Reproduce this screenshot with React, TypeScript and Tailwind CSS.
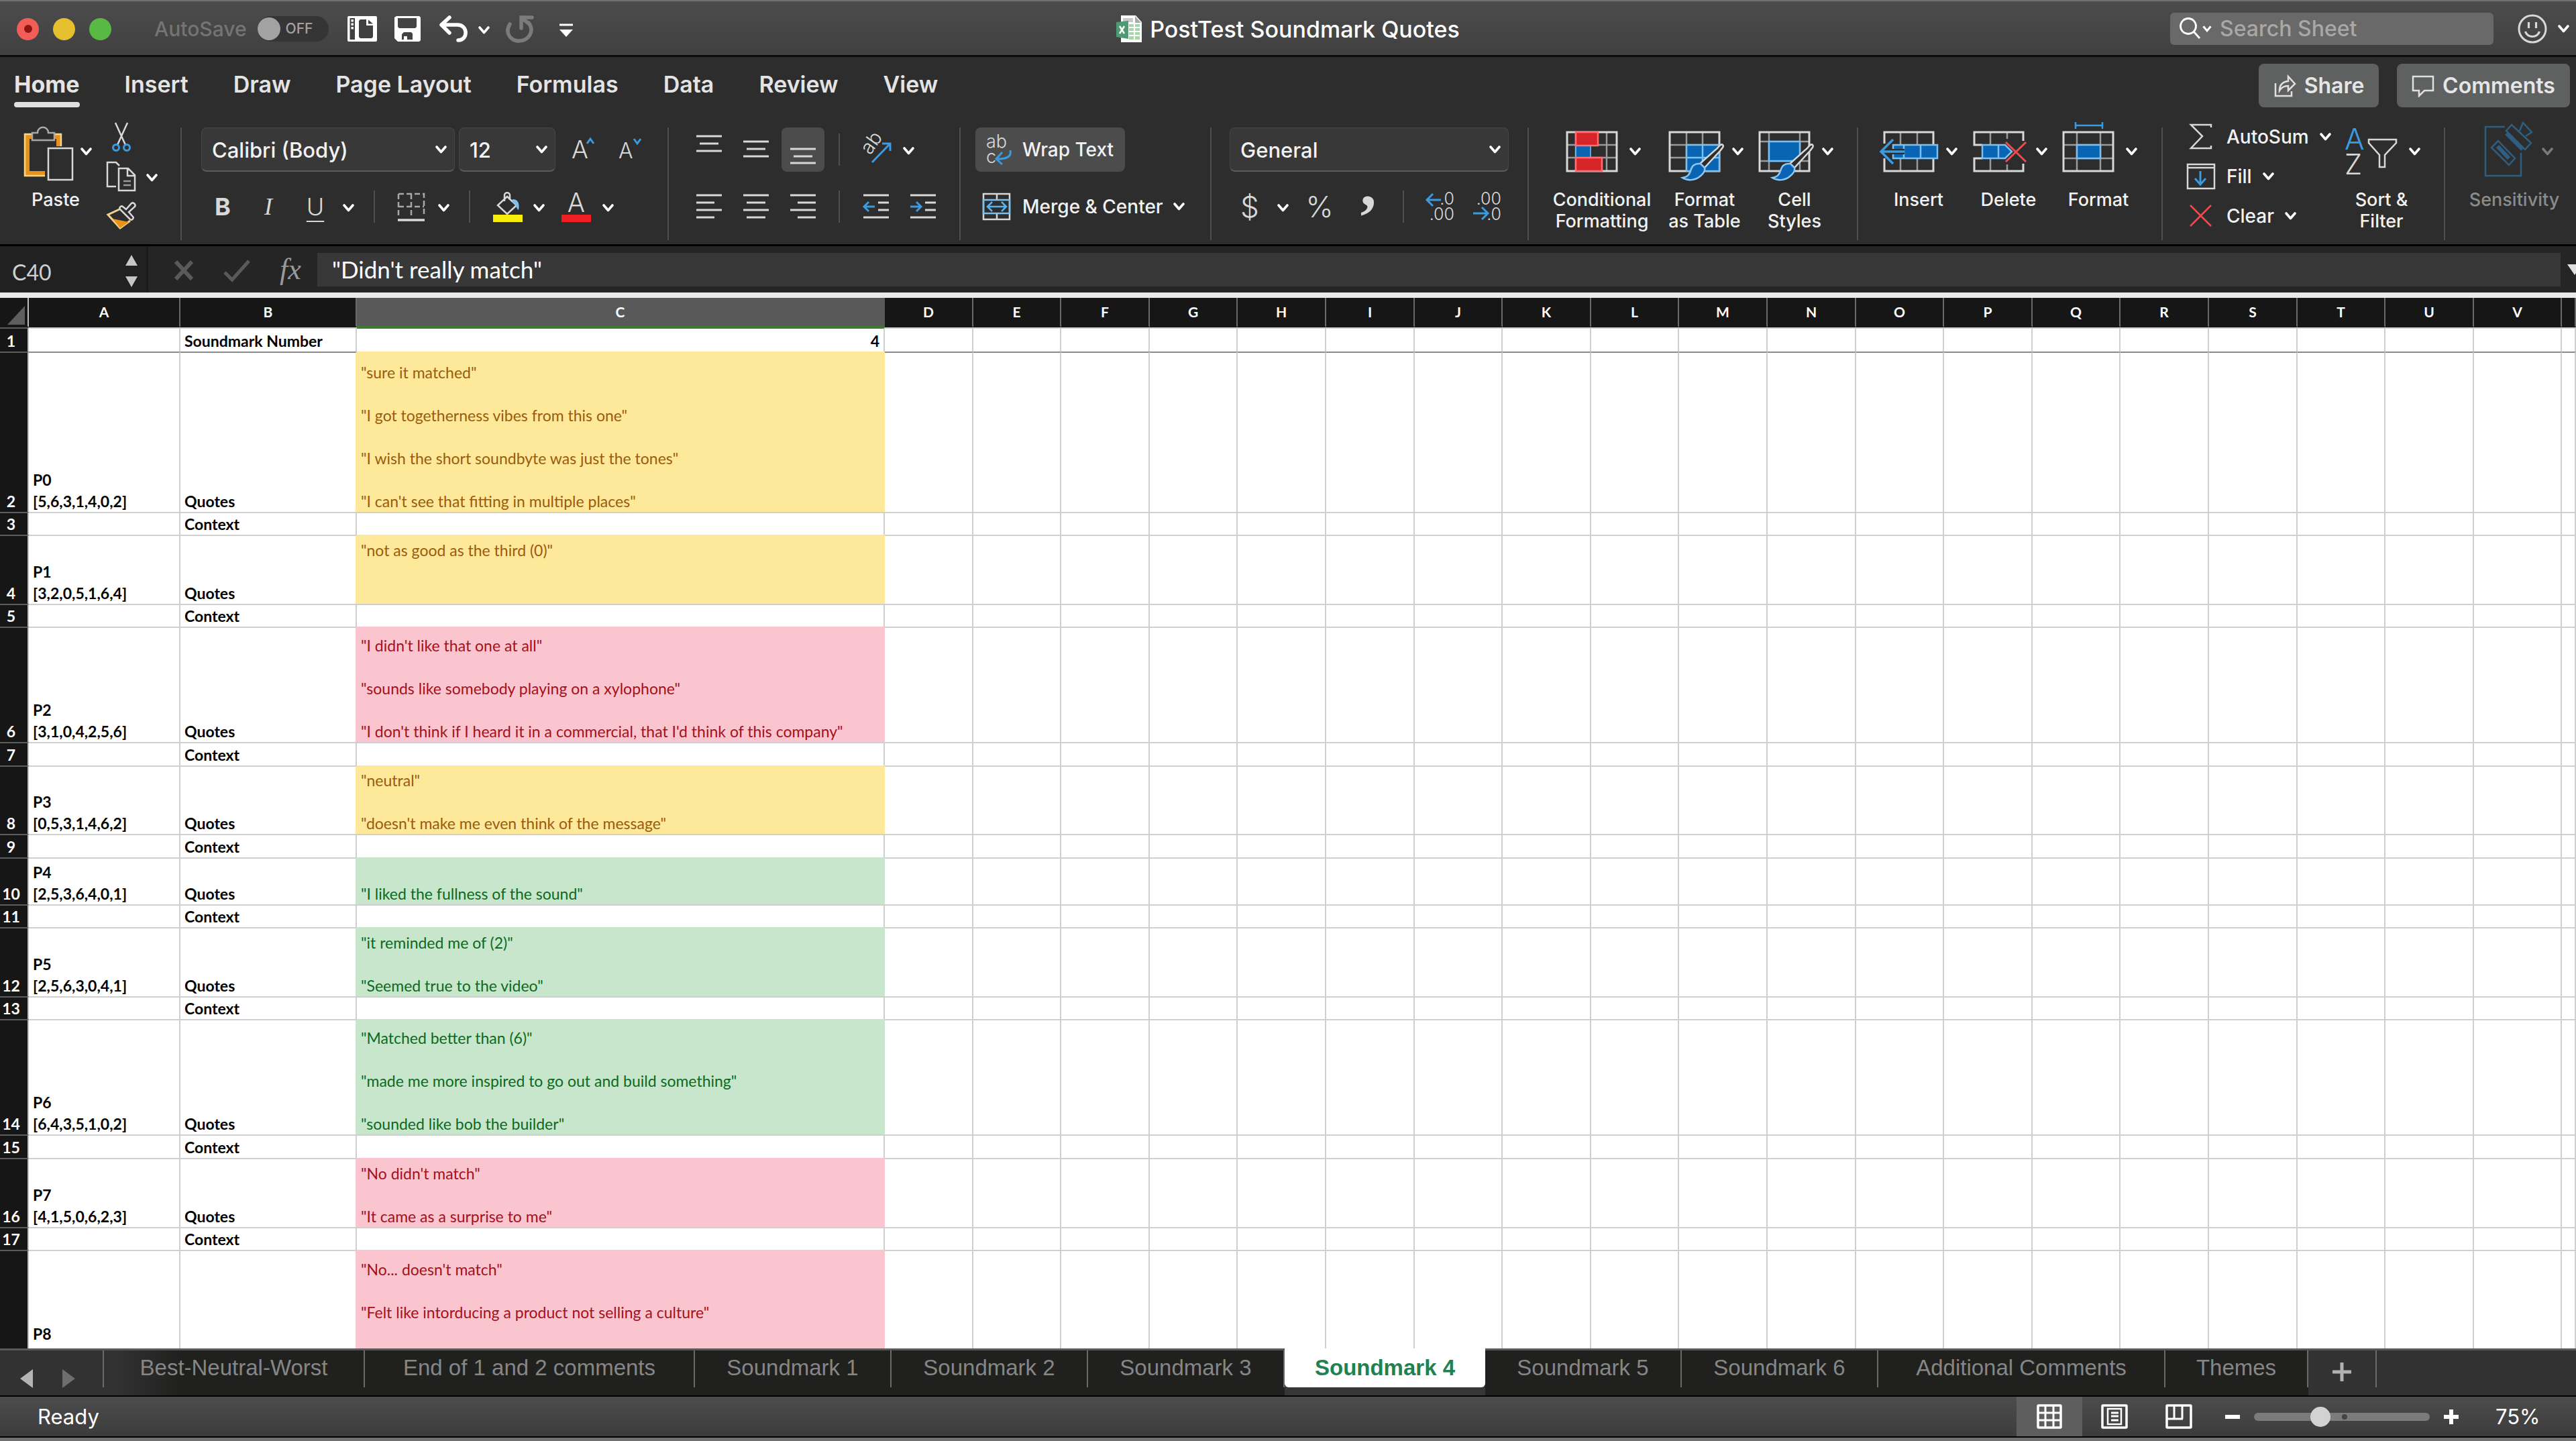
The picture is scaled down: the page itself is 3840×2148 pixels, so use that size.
import type { ReactNode } from 'react'
import clsx from 'clsx'

type Tone = 'neutral' | 'good' | 'bad'

interface Row {
  height: string
  order?: string[]
  label: string
  tone?: Tone
  lines?: string[]
}

const ROWS: Row[] = [
  { height: 'h-[239px]', order: ['P0', '[5,6,3,1,4,0,2]'], label: 'Quotes', tone: 'neutral', lines: ['"sure it matched"', '', '"I got togetherness vibes from this one"', '', '"I wish the short soundbyte was just the tones"', '', '"I can\'t see that fitting in multiple places"'] },
  { height: 'h-[34px]', label: 'Context' },
  { height: 'h-[103px]', order: ['P1', '[3,2,0,5,1,6,4]'], label: 'Quotes', tone: 'neutral', lines: ['"not as good as the third (0)"', '', ''] },
  { height: 'h-[34px]', label: 'Context' },
  { height: 'h-[172px]', order: ['P2', '[3,1,0,4,2,5,6]'], label: 'Quotes', tone: 'bad', lines: ['"I didn\'t like that one at all"', '', '"sounds like somebody playing on a xylophone"', '', '"I don\'t think if I heard it in a commercial, that I\'d think of this company"'] },
  { height: 'h-[35px]', label: 'Context' },
  { height: 'h-[102px]', order: ['P3', '[0,5,3,1,4,6,2]'], label: 'Quotes', tone: 'neutral', lines: ['"neutral"', '', '"doesn\'t make me even think of the message"'] },
  { height: 'h-[35px]', label: 'Context' },
  { height: 'h-[70px]', order: ['P4', '[2,5,3,6,4,0,1]'], label: 'Quotes', tone: 'good', lines: ['"I liked the fullness of the sound"'] },
  { height: 'h-[34px]', label: 'Context' },
  { height: 'h-[103px]', order: ['P5', '[2,5,6,3,0,4,1]'], label: 'Quotes', tone: 'good', lines: ['"it reminded me of (2)"', '', '"Seemed true to the video"'] },
  { height: 'h-[34px]', label: 'Context' },
  { height: 'h-[172px]', order: ['P6', '[6,4,3,5,1,0,2]'], label: 'Quotes', tone: 'good', lines: ['"Matched better than (6)"', '', '"made me more inspired to go out and build something"', '', '"sounded like bob the builder"'] },
  { height: 'h-[35px]', label: 'Context' },
  { height: 'h-[103px]', order: ['P7', '[4,1,5,0,6,2,3]'], label: 'Quotes', tone: 'bad', lines: ['"No didn\'t match"', '', '"It came as a surprise to me"'] },
  { height: 'h-[34px]', label: 'Context' },
  { height: 'h-[173px]', order: ['P8', ''], label: '', tone: 'bad', lines: ['"No... doesn\'t match"', '', '"Felt like intorducing a product not selling a culture"', '', ''] },
]

const FILL: Record<Tone, string> = {
  neutral: 'bg-[#fde999] text-[#9c5a0d] border-t-[#fde999] border-r-[#fde999]',
  good: 'bg-[#c8e6cb] text-[#0b6a1d] border-t-[#c8e6cb] border-r-[#c8e6cb]',
  bad: 'bg-[#fac5ce] text-[#a3101c] border-t-[#fac5ce] border-r-[#fac5ce]',
}
// right edge of column B, hidden where the filled cell starts
const EDGE: Record<Tone, string> = {
  neutral: 'border-r-[#fde999]',
  good: 'border-r-[#c8e6cb]',
  bad: 'border-r-[#fac5ce]',
}

const EMPTY_COLS = 'DEFGHIJKLMNOPQRSTUV'.split('')

const MENU = ['Home', 'Insert', 'Draw', 'Page Layout', 'Formulas', 'Data', 'Review', 'View']

const SHEETS = [
  { name: 'Best-Neutral-Worst', width: 'w-[391px]' },
  { name: 'End of 1 and 2 comments', width: 'w-[492px]' },
  { name: 'Soundmark 1', width: 'w-[293px]' },
  { name: 'Soundmark 2', width: 'w-[293px]' },
  { name: 'Soundmark 3', width: 'w-[293px]' },
  { name: 'Soundmark 4', width: 'w-[299px]', active: true },
  { name: 'Soundmark 5', width: 'w-[293px]' },
  { name: 'Soundmark 6', width: 'w-[293px]' },
  { name: 'Additional Comments', width: 'w-[428px]' },
  { name: 'Themes', width: 'w-[213px]' },
]

/* ---------- small pieces ---------- */

function Chevron({ className = 'text-white' }: { className?: string }) {
  return (
    <svg viewBox="0 0 17 12" className={clsx('w-[17px] h-3 shrink-0', className)} fill="none" stroke="currentColor" strokeWidth="3.6" strokeLinecap="round" strokeLinejoin="round">
      <path d="M2 2 8.500 9.500 15 2" />
    </svg>
  )
}

function MenuArrow({ label }: { label: string }) {
  return (
    <button aria-label={label} className="w-[30px] h-11 flex items-center justify-center pt-1">
      <Chevron />
    </button>
  )
}

function Icon({ children, className }: { children: ReactNode; className?: string }) {
  return (
    <svg viewBox="0 0 44 44" fill="none" stroke="#d8d8d8" strokeWidth="2.5" className={clsx('w-11 h-11 shrink-0 overflow-visible', className)}>
      {children}
    </svg>
  )
}

function Tool({ label, active, children }: { label: string; active?: boolean; children: ReactNode }) {
  return (
    <button aria-label={label} className={clsx('w-16 flex items-center justify-center rounded-lg', active ? 'h-[66px] bg-[#4c4c4c]' : 'h-12')}>
      {children}
    </button>
  )
}

function Divider() {
  return <div className="w-[2px] h-[168px] mt-2 bg-[#4f4f4f] shrink-0" />
}

function MiniDivider() {
  return <div className="w-[2px] h-12 bg-[#4f4f4f] shrink-0" />
}

interface BigButtonProps {
  label: string[]
  width: string
  icon: ReactNode
  gap?: string
  dim?: boolean
}

function BigButton({ label, width, icon, gap = 'gap-[18px]', dim }: BigButtonProps) {
  return (
    <button className={clsx('flex flex-col items-center shrink-0', width)}>
      <span className={clsx('flex items-center', gap)}>
        <svg viewBox="0 0 80 88" className="w-20 h-[88px] overflow-visible" fill="none" stroke="#d8d8d8" strokeWidth="2.5">
          {icon}
        </svg>
        <Chevron className={dim ? 'text-[#7a7a7a]' : 'text-white'} />
      </span>
      <span className={clsx('mt-3 text-[27px] leading-8 font-medium whitespace-nowrap', dim ? 'text-[#8b8b8b]' : 'text-[#f2f2f2]')}>
        {label.map(l => <span key={l} className="block">{l}</span>)}
      </span>
    </button>
  )
}

function Dropdown({ label, value, width }: { label: string; value: string; width: string }) {
  return (
    <div className={clsx('relative h-[66px]', width)}>
      <select
        aria-label={label}
        defaultValue={value}
        className="appearance-none w-full h-full pt-1 pl-[15px] pr-10 rounded-lg bg-[#383838] border border-[#464646] border-b-2 border-b-[#5c5c5c] text-[31px] font-medium text-[#f2f2f2]"
      >
        <option>{value}</option>
      </select>
      <span className="absolute right-3 top-0 h-full flex items-center pointer-events-none">
        <Chevron />
      </span>
    </div>
  )
}

function Bars({ rows }: { rows: [number, number, number][] }) {
  return (
    <Icon>
      {rows.map(([x1, x2, y]) => <path key={y} d={`M${x1} ${y}H${x2}`} strokeWidth="3" />)}
    </Icon>
  )
}

/* ---------- title bar ---------- */

function TitleBar() {
  return (
    <header className="h-[85px] pt-[2px] shrink-0 grid grid-cols-[1fr_auto_1fr] items-center bg-linear-to-b from-[#4c4c4c] to-[#404040] border-t-2 border-t-[#707070] border-b-3 border-b-[#0c0c0c]">
      <div className="flex items-center pl-[25px]">
        <div className="flex gap-[21px]">
          <button aria-label="Close" className="w-[33px] h-[33px] rounded-full bg-[#f25e57] flex items-center justify-center">
            <span className="w-3 h-3 rounded-full bg-[#8e1512]" />
          </button>
          <button aria-label="Minimize" className="w-[33px] h-[33px] rounded-full bg-[#e5c02c]" />
          <button aria-label="Zoom window" className="w-[33px] h-[33px] rounded-full bg-[#58ba43]" />
        </div>
        <label className="flex items-center ml-16 gap-4 text-[30px] font-medium text-[#747474]">
          AutoSave
          <input type="checkbox" className="sr-only" />
          <span className="w-[106px] h-[38px] rounded-full bg-[#353535] flex items-center gap-2">
            <span className="w-[34px] h-[34px] rounded-full bg-[#a2a2a2]" />
            <span className="text-[21px] text-[#a2a2a2]">OFF</span>
          </span>
        </label>
        <button aria-label="Templates" className="ml-7">
          <Icon>
            <rect x="0" y="3" width="44" height="38" rx="2" fill="#fff" stroke="none" />
            <path d="M3.500 6H11v32H3.500z" fill="#3f3f3f" stroke="none" />
            <path d="M7.200 8v3.500M7.200 13.500V17M7.200 19v3.500" stroke="#fff" strokeWidth="3.500" />
            <path d="M19 8h9v9h10v17l-2 2H19l-2-2V10zM31 8.500l7 6h-7z" fill="#3f3f3f" stroke="none" />
          </Icon>
        </button>
        <button aria-label="Save" className="ml-[27px]">
          <Icon>
            <path d="M2 3h34l2 2v34l-2 2H4l-5-5V5z" fill="#fff" stroke="none" />
            <path d="M4 6h28v13l-2 2H6l-2-2zM13 27h11l2 2v9h-8v-5h-5v5h-3v-8z" fill="#444" stroke="none" />
          </Icon>
        </button>
        <button aria-label="Undo" className="ml-[22px]">
          <Icon>
            <path d="M15 5 3 16 15 28M4 16h23c16 0 16 23 1 23" stroke="#fff" strokeWidth="5.500" strokeLinecap="round" strokeLinejoin="round" />
          </Icon>
        </button>
        <div className="ml-2"><MenuArrow label="Undo history" /></div>
        <button aria-label="Redo" className="ml-[17px]">
          <Icon>
            <path d="M6 15C-2 28 7 40 20 40s24-14 14-27M23 21V5h16M23 5l11 9" stroke="#7b7b7b" strokeWidth="5.500" strokeLinecap="round" />
          </Icon>
        </button>
        <button aria-label="Customize toolbar" className="ml-6">
          <Icon>
            <path d="M12 16h20" stroke="#fff" strokeWidth="3" />
            <path d="M12 23h20L22 34z" fill="#fff" stroke="none" />
          </Icon>
        </button>
      </div>

      <h1 className="flex items-center gap-3 text-[34px] font-medium text-white whitespace-nowrap">
        <svg viewBox="0 0 38 40" className="w-[38px] h-10">
          <path d="M7 0h22l9 10v30H7z" fill="#fff" />
          <path d="M10 4h15v6H10z" fill="#c9c9c9" />
          <path d="M28 1v10h9z" fill="#aaa" />
          <path d="M19 13h7v4h-7zM28 13h7v4h-7zM19 19h7v4h-7zM28 19h7v4h-7zM19 25h7v4h-7zM28 25h7v4h-7zM19 31h7v5h-7zM28 31h7v5h-7z" fill="#a5d7ab" />
          <path d="M0 10 18 8v27L0 32z" fill="#4d9a73" />
          <path d="m5 16 7 11M12 16 5 27" stroke="#fff" strokeWidth="2.500" />
        </svg>
        PostTest Soundmark Quotes
      </h1>

      <div className="flex items-center justify-end pr-[10px]">
        <label className="flex items-center w-[482px] h-12 rounded-md bg-[#696969] pl-[14px]">
          <svg viewBox="0 0 34 34" className="w-[34px] h-[34px]" fill="none" stroke="#fff" strokeWidth="2.800">
            <circle cx="13" cy="13" r="11.500" />
            <path d="m21 21 9 10" />
          </svg>
          <svg viewBox="0 0 17 12" className="w-[14px] h-[10px]" fill="none" stroke="#fff" strokeWidth="3.600">
            <path d="M1.800 1.500 8.500 9.500 15.200 1.500" />
          </svg>
          <input
            type="search"
            aria-label="Search Sheet"
            placeholder="Search Sheet"
            className="ml-3 w-[360px] bg-transparent outline-none text-[32px] font-medium placeholder:text-[#a8a8a8]"
          />
        </label>
        <button aria-label="Feedback" className="flex items-center ml-9 gap-4">
          <Icon>
            <circle cx="22" cy="22" r="20" strokeWidth="3" />
            <path d="M16.500 12v9M27.500 12v9M11.500 26c3 10 18 10 21 0" strokeWidth="3.200" />
          </Icon>
          <Chevron />
        </button>
      </div>
    </header>
  )
}

/* ---------- ribbon ---------- */

function MenuRow() {
  return (
    <div className="h-[97px] flex items-start justify-between pt-[10px] pl-[21px] pr-[9px]">
      <nav className="flex gap-[67px] pt-[13px]">
        {MENU.map(m => (
          <a
            key={m}
            href="#"
            className={clsx(
              'flex flex-col items-center text-[34px] leading-9 text-[#e4e4e4] whitespace-nowrap',
              m === 'Home' ? 'font-bold' : 'font-semibold',
            )}
          >
            {m}
            {m === 'Home' && <span className="mt-2 w-full h-2 rounded-full bg-[#e0e0de]" />}
          </a>
        ))}
      </nav>
      <div className="flex gap-[27px] text-[32px] font-semibold text-[#e6e6e6]">
        <button className="w-[179px] h-[65px] rounded-lg bg-[#5f6160] flex items-center justify-center gap-3">
          <svg viewBox="0 0 34 34" className="w-[34px] h-[34px]" fill="none" stroke="#e0e0e0" strokeWidth="2.500">
            <path d="M3 13v19h24v-7M9 24c0-9 5-13 13-14V3l10 11-10 10v-7c-6 0-10 2-13 7z" />
          </svg>
          Share
        </button>
        <button className="w-[258px] h-[65px] rounded-lg bg-[#5f6160] flex items-center justify-center gap-3">
          <svg viewBox="0 0 34 34" className="w-[34px] h-[34px]" fill="none" stroke="#e0e0e0" strokeWidth="2.500">
            <path d="M2 3h30v21H19l-8 8v-8H2z" />
          </svg>
          Comments
        </button>
      </div>
    </div>
  )
}

const BRUSH = (
  <>
    <path d="M84 34c-2-2-5 1-8 5L50 62l6 7 24-26c4-5 6-7 4-9z" fill="#2d2d2d" strokeWidth="2.500" />
    <path d="M51 62c-10-1-13 4-15 11-2 6-5 9-12 10 8 5 19 4 26-2 5-4 8-9 7-13z" fill="#0a64b4" stroke="#8cc8f2" />
  </>
)

function Ribbon() {
  return (
    <section className="shrink-0 bg-[#2d2d2d] border-b-3 border-b-black">
      <MenuRow />
      <div className="flex h-[182px]">
        {/* Clipboard */}
        <div className="flex w-[269px] pl-[29px] shrink-0">
          <BigButton
            width="w-[108px]"
            gap="gap-[11px]"
            label={['Paste']}
            icon={
              <>
                <rect x="11.500" y="21.500" width="47" height="55" stroke="#e8921e" strokeWidth="7" />
                <rect x="8" y="18" width="54" height="62" stroke="#fbd58a" strokeWidth="2.500" />
                <path d="M19 16h8c0-11 16-11 16 0h9v11H19z" fill="#2d2d2d" stroke="#a8a8a8" />
                <path d="M38 36h27v52H38z" fill="#2d2d2d" stroke="none" />
                <rect x="43" y="39" width="36" height="47" fill="#2d2d2d" />
              </>
            }
          />
          <div className="flex flex-col gap-[15px] ml-[22px]">
            <button aria-label="Cut">
              <Icon>
                <path d="M13 1 28 34M31 1 16 34" />
                <circle cx="14" cy="38" r="4.500" stroke="#3b9be0" strokeWidth="3" />
                <circle cx="30" cy="38" r="4.500" stroke="#3b9be0" strokeWidth="3" />
              </Icon>
            </button>
            <div className="flex gap-2">
              <button aria-label="Copy">
                <Icon>
                  <path d="M14 37H1V1h13l5 5M18 10h14l10 10v23H18zM31 10v11h11" />
                  <path d="M25 29h11M25 35h11" stroke="#9a9a9a" />
                </Icon>
              </button>
              <MenuArrow label="Copy options" />
            </div>
            <button aria-label="Format painter" className="w-11">
              <Icon>
                <path d="M19 12 2 20l18 20 15-11" stroke="#f7d38a" strokeWidth="3" />
                <path d="m9 26 24 5-13 9z" fill="#e8921e" stroke="none" />
                <path d="M24 8c-2-2-6 1-4 4l15 15c3 2 6-2 4-4l-6-7 9-8c2-3-2-7-5-5l-8 9z" />
              </Icon>
            </button>
          </div>
        </div>
        <Divider />

        {/* Font */}
        <div className="w-[724px] pl-[29px] pt-2 shrink-0 flex flex-col gap-7">
          <div className="flex items-center">
            <Dropdown label="Font" value="Calibri (Body)" width="w-[378px]" />
            <Dropdown label="Font size" value="12" width="w-[144px] ml-[6px]" />
            <button aria-label="Increase font size" className="ml-5">
              <svg viewBox="0 0 50 44" className="w-[50px] h-11 overflow-visible" fill="none">
                <text x="4" y="35" fontSize="37" fontWeight="300" fill="#d8d8d8">A</text>
                <path d="m27 13 5-7 5 7" stroke="#3b9be0" strokeWidth="3" />
              </svg>
            </button>
            <button aria-label="Decrease font size" className="ml-5">
              <svg viewBox="0 0 50 44" className="w-[50px] h-11 overflow-visible" fill="none">
                <text x="4" y="35" fontSize="32" fontWeight="300" fill="#d8d8d8">A</text>
                <path d="m27 6 5 7 5-7" stroke="#3b9be0" strokeWidth="3" />
              </svg>
            </button>
          </div>
          <div className="flex items-center h-12 text-[#d8d8d8] text-[36px] leading-none">
            <button aria-label="Bold" className="w-16 font-bold">B</button>
            <button aria-label="Italic" className="w-[72px] font-['Liberation_Serif'] italic">I</button>
            <button aria-label="Underline" className="w-[68px] font-light underline underline-offset-8 decoration-2">U</button>
            <MenuArrow label="Underline options" />
            <div className="ml-[23px]"><MiniDivider /></div>
            <button aria-label="Borders" className="ml-8">
              <Icon>
                <path d="M3 3h38v34M3 3v34M22 3v34M3 22h38" strokeDasharray="8 4" stroke="#a8a8a8" />
                <path d="M2 42h40" strokeWidth="3.500" />
              </Icon>
            </button>
            <div className="ml-[11px]"><MenuArrow label="Border options" /></div>
            <div className="ml-[23px]"><MiniDivider /></div>
            <button aria-label="Fill color" className="ml-[34px]">
              <Icon>
                <path d="M17 14V5c0-5 8-5 8 0v7M21 7 7 20l14 13 14-13z" />
                <path d="M29 11c8 0 11 6 9 16-5-3-2-9-9-11z" fill="#7cc0f0" stroke="none" />
                <path d="M0 34h44v11H0z" fill="#f8ed0c" stroke="none" />
              </Icon>
            </button>
            <div className="ml-[9px]"><MenuArrow label="Fill color options" /></div>
            <button aria-label="Font color" className="ml-[19px]">
              <Icon>
                <text x="22" y="30" textAnchor="middle" fontSize="39" fontWeight="300" fill="#d8d8d8" stroke="none">A</text>
                <path d="M0 34h44v11H0z" fill="#ee1f23" stroke="none" />
              </Icon>
            </button>
            <div className="ml-[10px]"><MenuArrow label="Font color options" /></div>
          </div>
        </div>
        <Divider />

        {/* Alignment */}
        <div className="w-[433px] pl-7 pt-2 shrink-0 flex flex-col gap-7">
          <div className="flex items-center h-[66px] gap-[6px]">
            <Tool label="Align top"><Bars rows={[[3, 41, 2], [8, 36, 13], [3, 41, 24]]} /></Tool>
            <Tool label="Align middle"><Bars rows={[[3, 41, 10], [8, 36, 21], [3, 41, 32]]} /></Tool>
            <Tool label="Align bottom" active><Bars rows={[[3, 41, 21], [8, 36, 32], [3, 41, 42]]} /></Tool>
            <div className="ml-[15px]"><MiniDivider /></div>
            <button aria-label="Orientation" className="ml-[27px]">
              <Icon>
                <text transform="translate(12 31) rotate(-54)" fontSize="29" fontWeight="300" fill="#d8d8d8" stroke="none">ab</text>
                <path d="M15 41 41 14M30 13h12v11" stroke="#3b9be0" strokeWidth="3" />
              </Icon>
            </button>
            <div className="ml-1"><MenuArrow label="Orientation options" /></div>
          </div>
          <div className="flex items-center h-12 gap-[6px]">
            <Tool label="Align left"><Bars rows={[[3, 41, 5], [3, 30, 16], [3, 41, 27], [3, 30, 38]]} /></Tool>
            <Tool label="Center"><Bars rows={[[3, 41, 5], [8, 36, 16], [3, 41, 27], [8, 36, 38]]} /></Tool>
            <Tool label="Align right"><Bars rows={[[3, 41, 5], [14, 41, 16], [3, 41, 27], [14, 41, 38]]} /></Tool>
            <div className="ml-[15px]"><MiniDivider /></div>
            <div className="flex gap-[6px] ml-4">
              <Tool label="Decrease indent">
                <Icon>
                  <path d="M3 5h38M25 16h16M25 27h16M3 38h38" strokeWidth="3" />
                  <path d="M20 22H5M11 15l-7 7 7 7" stroke="#3b9be0" strokeWidth="3" />
                </Icon>
              </Tool>
              <Tool label="Increase indent">
                <Icon>
                  <path d="M3 5h38M25 16h16M25 27h16M3 38h38" strokeWidth="3" />
                  <path d="M3 22h15M12 15l7 7-7 7" stroke="#3b9be0" strokeWidth="3" />
                </Icon>
              </Tool>
            </div>
          </div>
        </div>
        <Divider />

        {/* Wrap and merge */}
        <div className="w-[372px] pl-[22px] pt-2 shrink-0 flex flex-col items-start gap-7 text-[28px] font-medium text-[#f2f2f2] whitespace-nowrap">
          <button className="w-[223px] h-[66px] pl-[11px] flex items-center gap-[15px] rounded-lg bg-[#4c4c4c]">
            <Icon>
              <text x="5" y="19" fontSize="27" fontWeight="300" fill="#d8d8d8" stroke="none">ab</text>
              <text x="5" y="42" fontSize="27" fontWeight="300" fill="#d8d8d8" stroke="none">c</text>
              <path d="M41 23c2 9-4 13-20 13M29 26 20 36l9 8" stroke="#3b9be0" strokeWidth="3" />
            </Icon>
            Wrap Text
          </button>
          <button className="h-12 pl-[11px] flex items-center gap-[15px]">
            <Icon>
              <rect x="1" y="3" width="39" height="38" />
              <path d="M21 3v8M21 33v8" />
              <path d="M1 12h39v20H1z" stroke="#7cc0f0" />
              <path d="M8 22h26M14 15l-7 7 7 7M28 15l7 7-7 7" stroke="#5ab2f0" />
            </Icon>
            Merge &amp; Center
            <Chevron />
          </button>
        </div>
        <Divider />

        {/* Number */}
        <div className="w-[471px] pl-[27px] pt-2 shrink-0 flex flex-col gap-7">
          <Dropdown label="Number format" value="General" width="w-[416px]" />
          <div className="flex items-center h-12 text-[#d8d8d8] text-[44px] leading-none font-light">
            <button aria-label="Currency" className="w-[60px]">$</button>
            <div className="ml-1"><MenuArrow label="Currency options" /></div>
            <button aria-label="Percent" className="ml-1 w-[72px]">%</button>
            <button aria-label="Comma style" className="ml-[14px]">
              <Icon>
                <text x="22" y="70" textAnchor="middle" fontSize="96" fontWeight="700" fontFamily="Liberation Serif" fill="#d8d8d8" stroke="none">’</text>
              </Icon>
            </button>
            <div className="ml-[30px]"><MiniDivider /></div>
            <div className="flex gap-[6px] ml-[22px]">
              <Tool label="Increase decimal">
                <Icon>
                  <text x="43" y="19" textAnchor="end" fontSize="25" fontWeight="300" fill="#d8d8d8" stroke="none">.0</text>
                  <text x="43" y="42" textAnchor="end" fontSize="25" fontWeight="300" fill="#d8d8d8" stroke="none">.00</text>
                  <path d="M23 12H2M11 3l-9 9 9 9" stroke="#3b9be0" strokeWidth="3" />
                </Icon>
              </Tool>
              <Tool label="Decrease decimal">
                <Icon>
                  <text x="43" y="19" textAnchor="end" fontSize="25" fontWeight="300" fill="#d8d8d8" stroke="none">.00</text>
                  <text x="43" y="42" textAnchor="end" fontSize="25" fontWeight="300" fill="#d8d8d8" stroke="none">.0</text>
                  <path d="M1 32h22M14 23l9 9-9 9" stroke="#3b9be0" strokeWidth="3" />
                </Icon>
              </Tool>
            </div>
          </div>
        </div>
        <Divider />

        {/* Styles */}
        <div className="w-[489px] pl-[29px] shrink-0 flex items-start">
          <BigButton
            width="w-40"
            label={['Conditional', 'Formatting']}
            icon={
              <>
                <path d="M18 15v58M64 15v58M5 34h74M5 53h74" stroke="#9a9a9a" />
                <rect x="5" y="15" width="74" height="58" strokeWidth="3" />
                <rect x="18" y="35" width="22" height="18" fill="#0a64b4" stroke="#7cc0f0" strokeWidth="1.500" />
                <rect x="18" y="15" width="33" height="20" fill="#d62428" stroke="#ff7076" />
                <rect x="18" y="53" width="39" height="20" fill="#d62428" stroke="#ff7076" />
              </>
            }
          />
          <BigButton
            width="w-[146px]"
            label={['Format', 'as Table']}
            icon={
              <>
                <path d="M30 15v58M54 15v58M5 34h74M5 53h74" stroke="#9a9a9a" />
                <rect x="5" y="15" width="74" height="58" strokeWidth="3" />
                <rect x="30" y="34" width="49" height="39" fill="#0a64b4" stroke="#7cc0f0" />
                <path d="M54 34v39M30 53h49" stroke="#7cc0f0" />
                {BRUSH}
              </>
            }
          />
          <BigButton
            width="w-[122px]"
            label={['Cell', 'Styles']}
            icon={
              <>
                <path d="M19 15v58M65 15v58M5 29h74M5 58h74" stroke="#9a9a9a" />
                <rect x="5" y="15" width="74" height="58" strokeWidth="3" />
                <rect x="19" y="29" width="46" height="29" fill="#0a64b4" stroke="#7cc0f0" />
                {BRUSH}
              </>
            }
          />
        </div>
        <Divider />

        {/* Cells */}
        <div className="w-[452px] pl-[23px] shrink-0 flex items-start">
          <BigButton
            width="w-[134px]"
            label={['Insert']}
            icon={
              <>
                <path d="M30 15v58M55 15v58" stroke="#9a9a9a" />
                <path d="M6 32V15h73v19M6 54v19h73V54" strokeWidth="3" />
                <path d="M19 34h66v20H19z" fill="#0a64b4" stroke="#7cc0f0" />
                <path d="M35 34v20M60 34v20" stroke="#7cc0f0" />
                <path d="M36 44H2" stroke="#2d2d2d" strokeWidth="8" />
                <path d="M36 44H1M19 26 1 44l18 18" stroke="#3b9be0" strokeWidth="3.500" />
              </>
            }
          />
          <BigButton
            width="w-[134px]"
            label={['Delete']}
            icon={
              <>
                <path d="M30 15v19M55 15v10M30 54v19M55 63v10" stroke="#9a9a9a" />
                <path d="M18 34H6V15h73v13M18 54H6v19h73V62" strokeWidth="3" />
                <path d="M18 34h34l10 10-10 10H18zM42 34v20" fill="#0a64b4" stroke="#7cc0f0" />
                <path d="m53 30 30 29M83 30 53 59" stroke="#ee4b50" strokeWidth="3" />
              </>
            }
          />
          <BigButton
            width="w-[134px]"
            label={['Format']}
            icon={
              <>
                <path d="M22 5h42M23 0v10M63 0v10" stroke="#3b9be0" />
                <path d="M25 15v58M60 15v58M5 34h74M5 54h74" stroke="#9a9a9a" />
                <rect x="5" y="15" width="74" height="58" strokeWidth="3" />
                <rect x="25" y="34" width="35" height="20" fill="#0a64b4" stroke="#7cc0f0" />
              </>
            }
          />
        </div>
        <Divider />

        {/* Editing */}
        <div className="w-[419px] pl-[35px] shrink-0 flex items-start">
          <div className="w-[222px] flex flex-col items-start gap-[15px] text-[28px] font-medium text-[#f2f2f2]">
            <button className="flex items-center h-11">
              <Icon><path d="M37 8V4H7l17 17L7 39h30v-4" /></Icon>
              <span className="mx-4">AutoSum</span>
              <Chevron />
            </button>
            <button className="flex items-center h-11">
              <Icon>
                <path d="M2 4h40v36H2zM2 9h40" />
                <path d="M21 14v19M13 25l8 9 8-9" stroke="#3b9be0" strokeWidth="3" />
              </Icon>
              <span className="mx-4">Fill</span>
              <Chevron />
            </button>
            <button className="flex items-center h-11">
              <Icon><path d="m6 6 31 31M37 6 6 37" stroke="#ee4b50" /></Icon>
              <span className="mx-4">Clear</span>
              <Chevron />
            </button>
          </div>
          <BigButton
            width="w-[138px]"
            label={['Sort &', 'Filter']}
            icon={
              <>
                <text x="2" y="41" fontSize="44" fontWeight="300" fill="#3b9be0" stroke="none">A</text>
                <text x="2" y="78" fontSize="42" fontWeight="300" fill="#d8d8d8" stroke="none">Z</text>
                <path d="M38 26h41v5L62 49v18h-8V49L38 31z" />
              </>
            }
          />
        </div>
        <Divider />

        {/* Sensitivity */}
        <div className="pl-[23px] shrink-0 flex items-start">
          <BigButton
            dim
            width="w-40"
            label={['Sensitivity']}
            icon={
              <g stroke="#2f5f80">
                <path d="M43 7H14v73h53V46" />
                <path d="m33 28 25 26-9 10-26-26z" />
                <path d="m32 36 17 18" strokeWidth="6" />
                <path d="m46 16 24 24" strokeWidth="8" />
                <path d="m53 4 29 27-9 10-28-28zM65 13l5-12 13 14-9 6" fill="#2d2d2d" />
              </g>
            }
          />
        </div>
      </div>
    </section>
  )
}

/* ---------- formula bar ---------- */

function FormulaBar() {
  return (
    <div className="h-[69px] shrink-0 flex items-center bg-[#252525] font-['Lato',sans-serif]">
      <div className="w-[221px] h-full pl-[18px] pr-3 flex items-center justify-between bg-[#212121] border-r-3 border-r-[#1a1a1a]">
        <input aria-label="Name box" defaultValue="C40" className="w-[140px] pt-2 bg-transparent outline-none text-[32px] text-[#d0d0d0]" />
        <svg viewBox="0 0 20 50" className="w-5 h-[50px] mt-1" fill="#c6c6c6">
          <path d="M10 1 19 17H1zM10 49 1 33h18z" />
        </svg>
      </div>
      <button aria-label="Cancel" className="ml-[31px]">
        <Icon><path d="m10 10 24 26M34 10 10 36" stroke="#5a5a5a" strokeWidth="6" /></Icon>
      </button>
      <button aria-label="Enter" className="ml-[35px]">
        <Icon><path d="M4 26 15 37 40 9" stroke="#5a5a5a" strokeWidth="5" /></Icon>
      </button>
      <span className="ml-[42px] w-[46px] font-['Liberation_Serif'] italic text-[44px] leading-none text-[#9a9a9a]">fx</span>
      <input
        aria-label="Formula"
        defaultValue={'"Didn\'t really match"'}
        className="ml-[10px] flex-1 h-[50px] pl-[22px] bg-[#383838] outline-none text-[35px] text-white"
      />
      <button aria-label="Expand formula bar" className="w-[23px] overflow-hidden">
        <svg viewBox="0 0 30 20" className="w-[30px] h-5 ml-[10px]" fill="#e0e0e0"><path d="M0 2h22L11 18z" /></svg>
      </button>
    </div>
  )
}

/* ---------- sheet ---------- */

const headerCell = 'bg-[#161616] border-b-2 border-b-[#161616]'
const rowHead = 'bg-[#161616] text-white text-[23px] leading-8 font-bold align-bottom border-t-2 border-t-[#5c5c5c] border-r-2 border-r-[#bdbdbd] p-0 pr-2'
const cell = 'p-0 px-[6px] align-bottom whitespace-nowrap border-r-2 border-t-2'

function Sheet() {
  return (
    <main className="flex-1 min-h-0 overflow-hidden bg-white border-t-8 border-t-[#e9e9e9] font-['Lato',sans-serif]">
      <table className="w-full table-fixed border-separate border-spacing-0 text-[23px] leading-8 text-black">
        <colgroup>
          <col className="w-[43px]" />
          <col className="w-[226px]" />
          <col className="w-[263px]" />
          <col className="w-[787px]" />
          {EMPTY_COLS.map((c, i) => <col key={c} className={i % 5 === 1 || i % 5 === 3 ? 'w-[131px]' : 'w-[132px]'} />)}
          <col />
        </colgroup>
        <thead>
          <tr className="h-11 text-white text-[21px]">
            <th className={clsx('p-0 border-r-2 border-r-[#bdbdbd] align-bottom', headerCell)}>
              <svg viewBox="0 0 26 28" className="w-[26px] h-7 ml-auto mb-[2px] mr-1" fill="#5e5e5e"><path d="M26 0v28H0z" /></svg>
            </th>
            {['A', 'B', 'C', ...EMPTY_COLS, ''].map(c => (
              <th
                key={c}
                scope="col"
                className={clsx(
                  'p-0 font-bold border-r-2',
                  c === 'C' ? 'bg-[#595959] border-b-2 border-b-[#3f7a35] border-r-[#595959]' : [headerCell, 'border-r-[#6a6a6a]'],
                )}
              >
                {c}
              </th>
            ))}
          </tr>
        </thead>
        <tbody>
          <tr className="h-9 font-bold">
            <th scope="row" className={rowHead}>1</th>
            <td className={clsx(cell, 'border-[#cfcfcf]')} />
            <td className={clsx(cell, 'border-[#cfcfcf]')}>Soundmark Number</td>
            <td className={clsx(cell, 'border-r-[#cfcfcf] border-t-[#3f7a35] text-right')}>4</td>
            {[...EMPTY_COLS, 'W'].map(c => <td key={c} className={clsx(cell, 'border-[#cfcfcf]')} />)}
          </tr>
          {ROWS.map((row, i) => {
            // the first row sits under the frozen pane, whose line is darker
            const top = i === 0 ? 'border-t-[#8a8a8a]' : 'border-t-[#cfcfcf]'
            return (
              <tr key={i} className={row.height}>
                <th scope="row" className={rowHead}>{row.label && i + 2}</th>
                <td className={clsx(cell, top, 'font-bold border-r-[#cfcfcf]')}>
                  {row.order?.map((l, n) => <div key={n} className="h-8">{l}</div>)}
                </td>
                <td className={clsx(cell, top, 'font-bold', row.tone ? EDGE[row.tone] : 'border-r-[#cfcfcf]')}>
                  {row.label}
                </td>
                <td className={clsx(cell, row.tone ? FILL[row.tone] : 'border-[#cfcfcf]')}>
                  {row.lines?.map((l, n) => <div key={n} className="h-8">{l}</div>)}
                </td>
                {[...EMPTY_COLS, 'W'].map(c => <td key={c} className={clsx(cell, top, 'border-r-[#cfcfcf]')} />)}
              </tr>
            )
          })}
        </tbody>
      </table>
    </main>
  )
}

/* ---------- bottom bars ---------- */

function SheetTabs() {
  return (
    <div className="h-[70px] shrink-0 flex bg-[#323232] font-['Liberation_Sans',sans-serif]">
      <div className="w-[153px] shrink-0 flex items-center gap-10 pl-[29px] pt-4 border-t-3 border-t-[#5a5a5a]">
        <button aria-label="Previous sheet">
          <svg viewBox="0 0 22 28" className="w-[22px] h-7" fill="#b4b4b4"><path d="M20 0v28L1 14z" /></svg>
        </button>
        <button aria-label="Next sheet">
          <svg viewBox="0 0 22 28" className="w-[22px] h-7" fill="#6e6e6e"><path d="M2 0v28L21 14z" /></svg>
        </button>
      </div>
      {SHEETS.map((s, i) => (
        <div
          key={s.name}
          className={clsx(
            'shrink-0',
            s.width,
            s.active ? 'bg-[#363636]' : 'border-t-3 border-t-[#5a5a5a]',
            !s.active && (i === 0 ? 'bg-linear-to-r from-[#323232] from-5% to-[#20201f] to-30%' : 'bg-[#20201f]'),
          )}
        >
          <button
            className={clsx(
              'w-full text-[33px] whitespace-nowrap',
              s.active
                ? 'h-[58px] bg-white text-[#21824f] font-bold rounded-b-md'
                : 'h-[55px] pb-[3px] text-[#868686] border-r-2 border-r-[#6a6a6a]',
              i === 0 && 'border-l-2 border-l-[#6a6a6a]',
            )}
          >
            {s.name}
          </button>
        </div>
      ))}
      <div className="flex-1 border-t-3 border-t-[#5a5a5a]">
        <button aria-label="Add sheet" className="w-[102px] h-[55px] flex items-center justify-center pt-2 border-r-2 border-r-[#6a6a6a]">
          <svg viewBox="0 0 28 28" className="w-7 h-7" stroke="#b0b0b0" strokeWidth="5"><path d="M14 0v28M0 14h28" /></svg>
        </button>
      </div>
    </div>
  )
}

function StatusBar() {
  return (
    <footer className="h-[68px] shrink-0 bg-[#707070] pb-[5px]">
      <div className="h-[63px] flex items-center border-y-2 border-y-black bg-linear-to-b from-[#4c4c4c] to-[#3c3c3c] text-[31px] text-white">
        <span className="pl-14 pt-[2px]">Ready</span>
        <div className="ml-auto flex items-center h-full">
          <button aria-label="Normal view" className="w-[98px] h-full flex items-center justify-center bg-[#5e5e5e]">
            <Icon>
              <rect x="5" y="5" width="34" height="33" rx="1" stroke="#fff" strokeWidth="3.500" />
              <path d="M16 5v33M28 5v33M5 16h34M5 27h34" stroke="#fff" strokeWidth="3" />
            </Icon>
          </button>
          <button aria-label="Page layout view" className="w-[96px] h-full flex items-center justify-center">
            <Icon>
              <rect x="4" y="5" width="36" height="33" rx="1" stroke="#fff" strokeWidth="3.500" />
              <rect x="12" y="10" width="20" height="23" stroke="#fff" />
              <path d="M17 16h11M17 21h11M17 27h11" stroke="#fff" strokeWidth="3" />
            </Icon>
          </button>
          <button aria-label="Page break view" className="w-[96px] h-full flex items-center justify-center">
            <Icon>
              <rect x="4" y="5" width="36" height="33" rx="1" stroke="#fff" strokeWidth="3.500" />
              <path d="M15 5v20M27 5v20M4 25h24" stroke="#fff" strokeWidth="3" />
            </Icon>
          </button>
          <button aria-label="Zoom out" className="ml-5 w-6">
            <svg viewBox="0 0 24 24" className="w-6 h-6" stroke="#fff" strokeWidth="6"><path d="M1 12h22" /></svg>
          </button>
          <div className="relative ml-5 flex items-center">
            <input
              type="range"
              aria-label="Zoom"
              defaultValue={36}
              className="appearance-none w-[262px] h-3 rounded-full bg-[#7b7b7b] [&::-webkit-slider-thumb]:appearance-none [&::-webkit-slider-thumb]:w-[30px] [&::-webkit-slider-thumb]:h-[30px] [&::-webkit-slider-thumb]:rounded-full [&::-webkit-slider-thumb]:bg-[#d2d2d2]"
            />
            <span className="absolute left-1/2 w-2 h-2 rounded-full bg-[#444] pointer-events-none" />
          </div>
          <button aria-label="Zoom in" className="ml-5 w-6">
            <svg viewBox="0 0 24 24" className="w-6 h-6" stroke="#fff" strokeWidth="6"><path d="M1 12h22M12 1v22" /></svg>
          </button>
          <span className="w-[174px] pl-[54px] pt-[2px] text-[31px]">75%</span>
        </div>
      </div>
    </footer>
  )
}

export default function App() {
  return (
    <div className="h-screen flex flex-col overflow-hidden bg-[#2d2d2d] font-['Inter',sans-serif]">
      <TitleBar />
      <Ribbon />
      <FormulaBar />
      <Sheet />
      <SheetTabs />
      <StatusBar />
    </div>
  )
}
